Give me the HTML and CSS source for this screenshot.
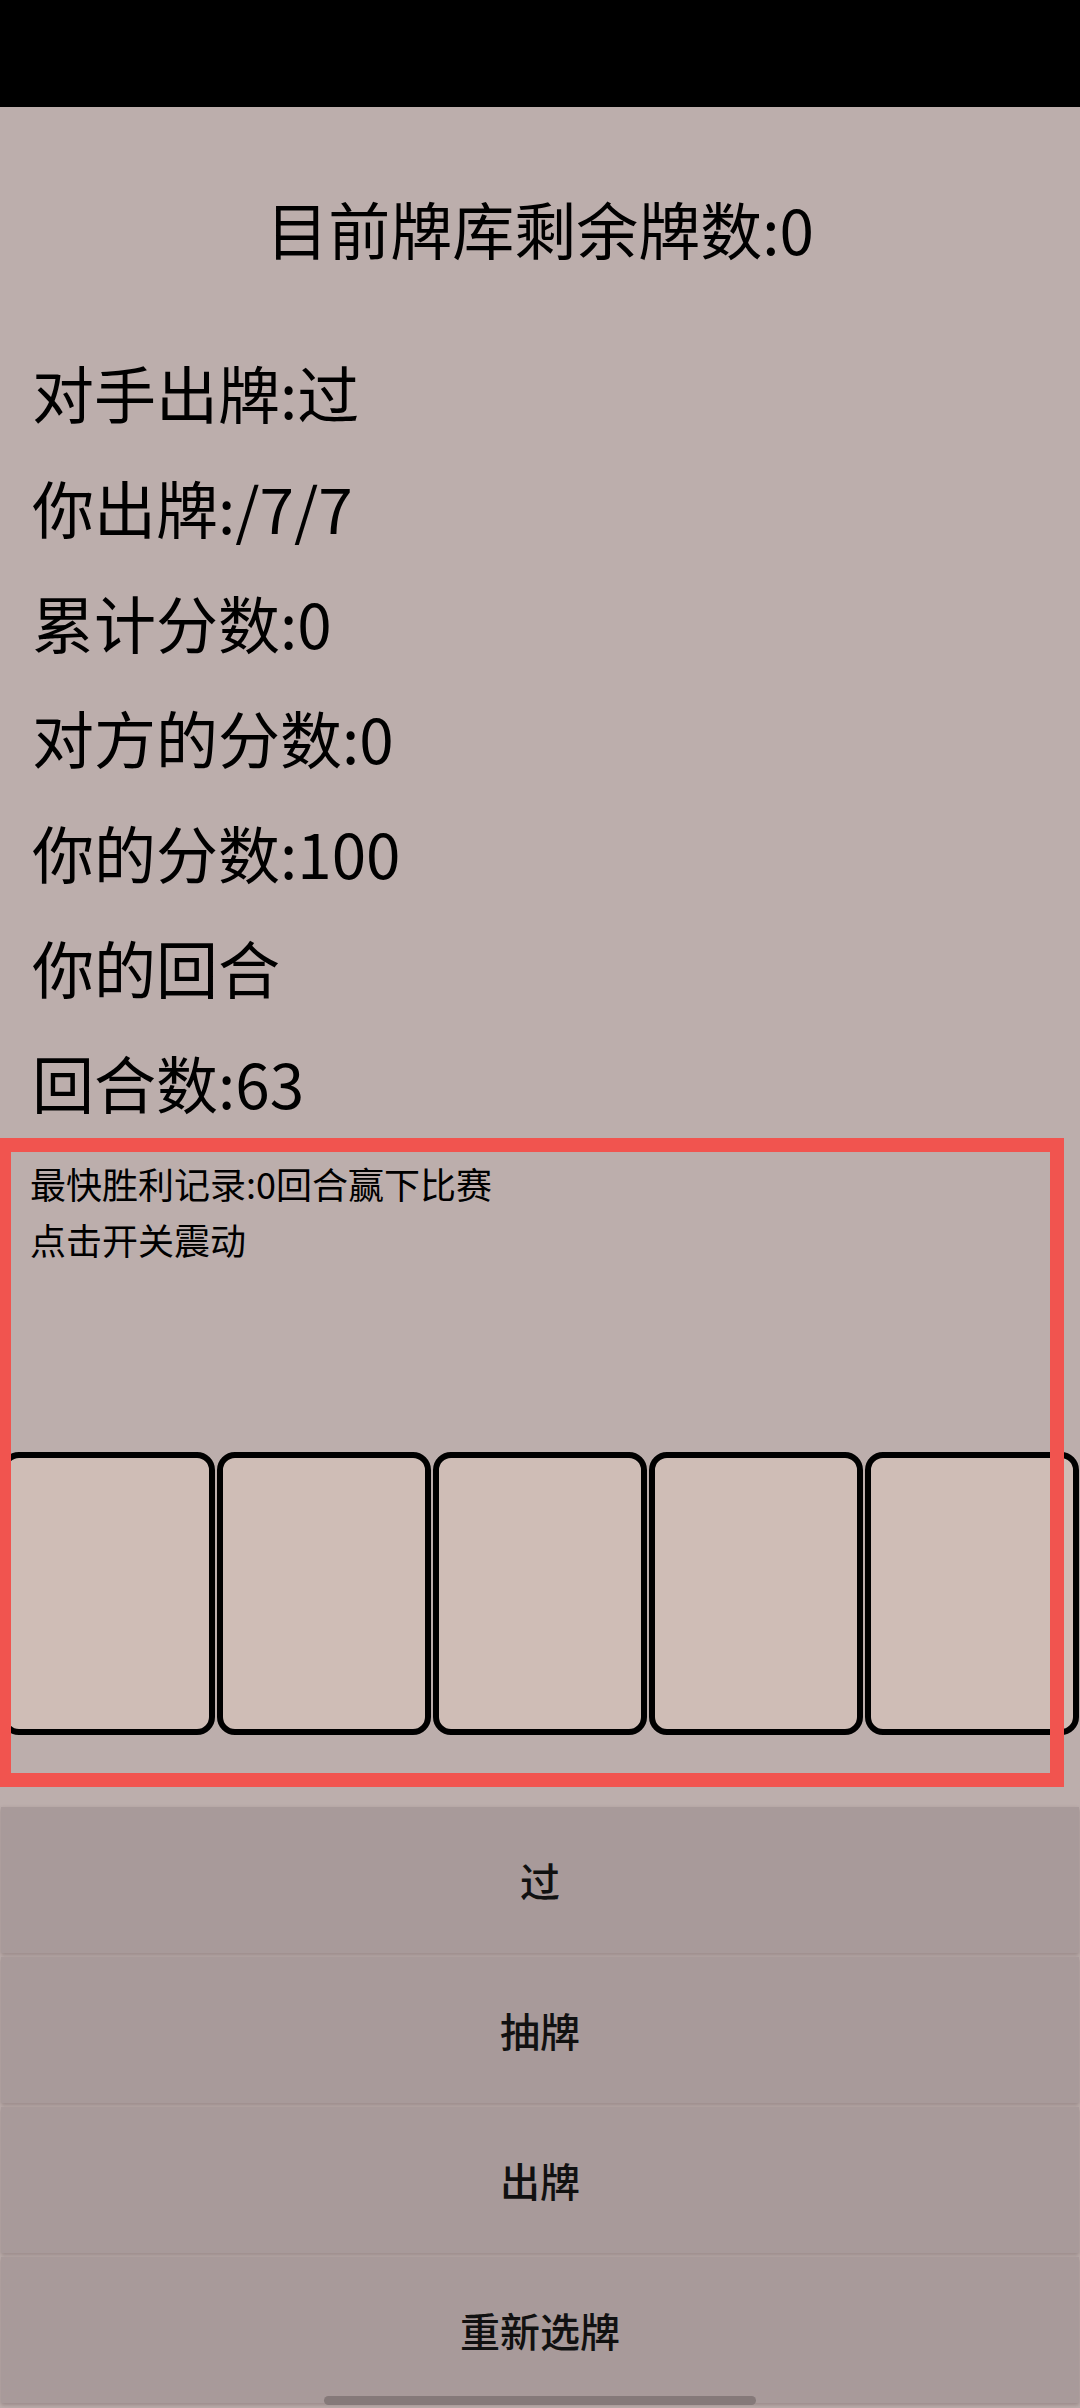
FILE: index.html
```html
<!DOCTYPE html>
<html lang="zh-CN">
<head>
<meta charset="utf-8">
<title>牌局</title>
<link rel="stylesheet" href="styles.css">
</head>
<body>
<div class="status-bar"></div>
<main class="info">
  <h1 class="deck">目前牌库剩余牌数:0</h1>
  <ul class="stats">
    <li>对手出牌:过</li>
    <li>你出牌:/7/7</li>
    <li>累计分数:0</li>
    <li>对方的分数:0</li>
    <li>你的分数:100</li>
    <li>你的回合</li>
    <li>回合数:63</li>
  </ul>
</main>
<section class="hand">
  <p class="note">最快胜利记录:0回合赢下比赛</p>
  <p class="note">点击开关震动</p>
  <div class="cards">
    <div class="card"></div>
    <div class="card"></div>
    <div class="card"></div>
    <div class="card"></div>
    <div class="card"></div>
  </div>
  <div class="frame"></div>
</section>
<nav class="actions">
  <button class="action">过</button>
  <button class="action">抽牌</button>
  <button class="action">出牌</button>
  <button class="action">重新选牌</button>
</nav>
<div class="home-handle"></div>
</body>
</html>
```
FILE: styles.css
```css
html, body {
  margin: 0;
  padding: 0;
}
body {
  width: 1080px;
  height: 2408px;
  overflow: hidden;
  position: relative;
  background: #bcaeac;
  color: #000;
  font-family: "Noto Sans CJK SC", "Noto Sans", sans-serif;
}
.status-bar {
  height: 107px;
  background: #000;
}
.info {
  padding: 0;
}
.deck {
  margin: 90px 0 0;
  font-size: 62px;
  line-height: 62px;
  font-weight: 400;
  text-align: center;
}
.stats {
  list-style: none;
  margin: 102px 0 0;
  padding: 0 0 0 32px;
  display: flex;
  flex-direction: column;
  gap: 53px;
}
.stats li {
  font-size: 62px;
  line-height: 62px;
  height: 62px;
}
.hand {
  position: relative;
  margin-top: 25px;
  padding: 27px 0 52px;
}
.note {
  margin: 0 0 20px 30px;
  font-size: 36px;
  line-height: 36px;
}
.cards {
  margin-top: 195px;
  display: flex;
}
.card {
  flex: 1;
  height: 271px;
  margin: 0 1px;
  border: 6px solid #000;
  border-radius: 18px;
  background: #cfbdb6;
}
.frame {
  position: absolute;
  left: -3px;
  top: 0;
  width: 1067px;
  height: 649px;
  box-sizing: border-box;
  border: 14px solid #f1544f;
  pointer-events: none;
}
.actions {
  margin-top: 20px;
  display: flex;
  flex-direction: column;
  gap: 4px;
  padding: 0 1px;
}
.action {
  height: 146px;
  border: none;
  margin: 0;
  padding: 0;
  background: #a89a9a;
  color: #111;
  font-family: "Noto Sans CJK SC", "Noto Sans", sans-serif;
  font-size: 40px;
  font-weight: 500;
  box-shadow: 0 2px 4px rgba(70, 50, 50, 0.3);
}
.home-handle {
  position: absolute;
  left: 324px;
  top: 2396px;
  width: 432px;
  height: 9px;
  border-radius: 5px;
  background: #857979;
}
```
